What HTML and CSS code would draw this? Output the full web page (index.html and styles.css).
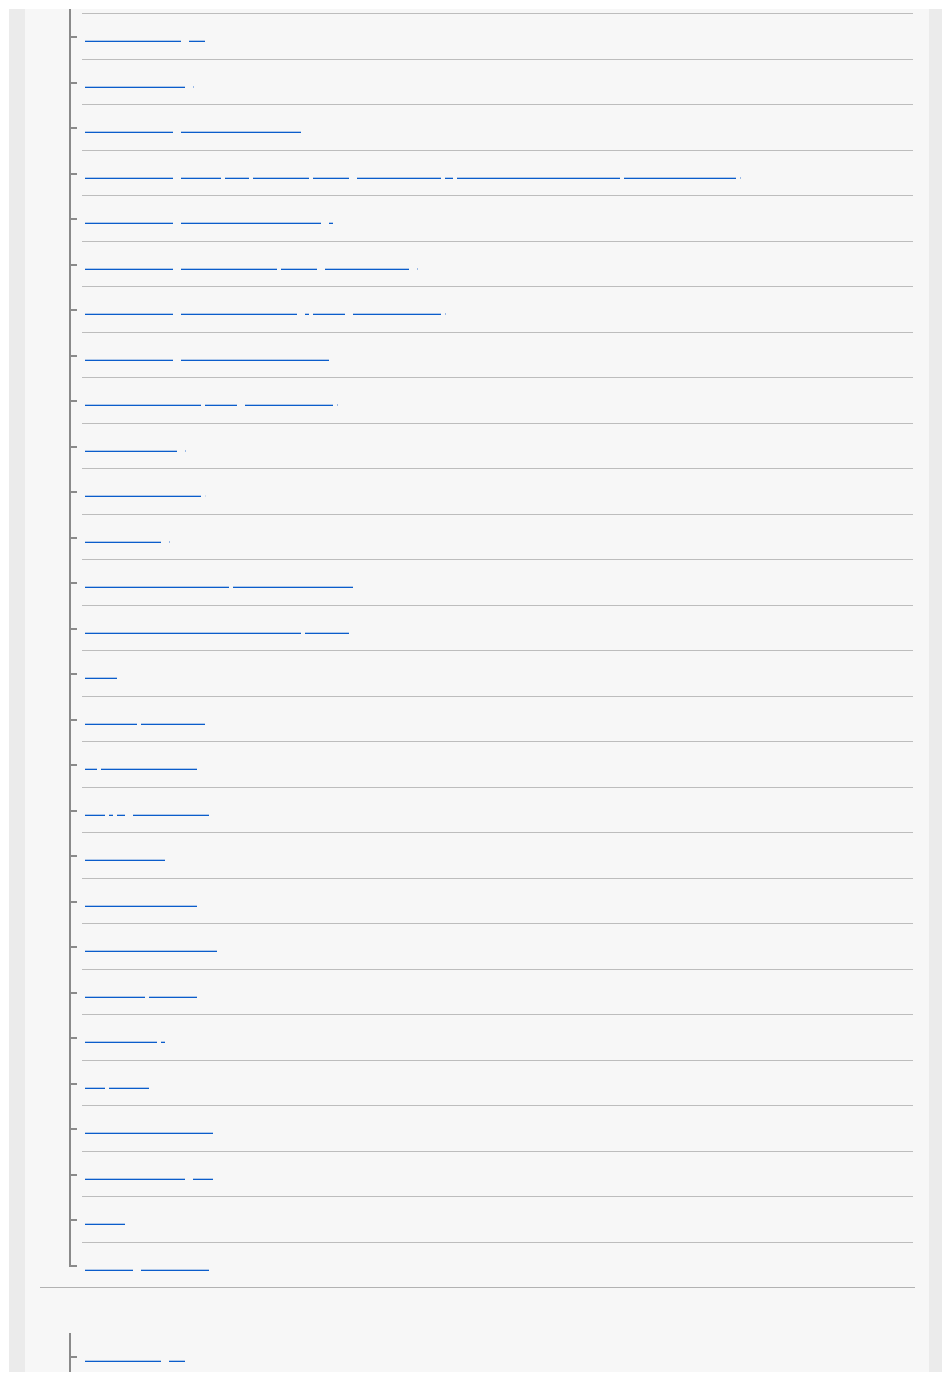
FILE: index.html
```html
<html>
<head>
  <link rel="stylesheet" href="styles.css">
</head>
<body>
<div class="page">
<div class="main">
<div class="section">
<ul class="tree">
<li><a href="#">Shooting with the camera</a>  <a href="#">menu</a></li>
<li><a href="#">Recording movie to a card</a>  <span class="dot"></span></li>
<li><a href="#">Using the camera menus</a>  <a href="#">Setting the white balance mode</a></li>
<li><a href="#">Using the camera menus</a>  <a href="#">Brightness</a> <a href="#">levels</a> <a href="#">for each scene</a> <a href="#">type when</a>  <a href="#">shooting in low light</a> <a href="#">or</a> <a href="#">against a strong backlight at the horizon</a> <a href="#">using automatic HDR blending</a> <span class="dot"></span></li>
<li><a href="#">Using the camera menus</a>  <a href="#">Registering custom shooting setting</a>  <a href="#">2</a></li>
<li><a href="#">Using the camera menus</a>  <a href="#">Selecting the focus area</a> <a href="#">and focus</a>  <a href="#">tracking for subjects</a>  <span class="dot"></span></li>
<li><a href="#">Using the camera menus</a>  <a href="#">Adjusting the eye AF settings</a>  <a href="#">/</a> <a href="#">priority</a>  <a href="#">for humans and animals</a> <span class="dot"></span></li>
<li><a href="#">Using the camera menus</a>  <a href="#">Assigning functions to custom buttons</a></li>
<li><a href="#">Network and wireless settings</a> <a href="#">Wi-Fi/BT</a>  <a href="#">connecting smartphones</a> <span class="dot"></span></li>
<li><a href="#">Transferring the images</a>  <span class="dot"></span></li>
<li><a href="#">Using the computer connection</a> <span class="dot faint"></span></li>
<li><a href="#">Remote shooting app</a>  <span class="dot"></span></li>
<li><a href="#">Streaming video and audio over a USB</a> <a href="#">connection to a computer (UVC)</a></li>
<li><a href="#">Importing and editing images with the imaging software</a> <a href="#">for desktop</a></li>
<li><a href="#">Glossary</a></li>
<li><a href="#">Specification</a> <a href="#">and battery life</a></li>
<li><a href="#">Q&amp;A</a> <a href="#">Troubleshooting messages</a></li>
<li><a href="#">Error</a> <a href="#">/</a> <a href="#">ID</a>  <a href="#">warning indications</a></li>
<li><a href="#">Cleaning the sensors</a></li>
<li><a href="#">Maintenance and storage tips</a></li>
<li><a href="#">Notes on using your camera abroad</a></li>
<li><a href="#">Battery charger</a> <a href="#">and AC power</a></li>
<li><a href="#">Recording capacity</a> <a href="#">1</a></li>
<li><a href="#">Using</a> <a href="#">the lenses</a></li>
<li><a href="#">Recordable time of movie formats</a></li>
<li><a href="#">Memory cards which can be</a>  <a href="#">used.</a></li>
<li><a href="#">Trademarks</a></li>
<li><a href="#">Notes on the</a>  <a href="#">license agreement</a></li>
</ul>
</div>
<div class="section next">
<ul class="tree open">
<li><a href="#">Checking the camera</a>  <a href="#">body</a></li>
</ul>
</div>
</div>
</div>
</body>
</html>
```

FILE: styles.css
```css
body {
  margin: 9px 8px 7px 9px;
  background: #fff;
  font-family: "Liberation Sans", Arial, sans-serif;
}

.page {
  height: 1363px;
  overflow: hidden;
  background: #ebebeb;
  padding: 0 13px 0 16px;
}

.main {
  height: 100%;
  background: #f7f7f7;
}

.section {
  margin: 0 14px 0 15px;
  border-bottom: 1px solid #b2b2b2;
}

.section.next {
  padding-top: 45px;
  border-bottom: none;
}

.tree {
  position: relative;
  list-style: none;
  margin: 0 2px 0 29px;
  padding: 4.3px 0 0;
  font: 6.6667px/7px "Liberation Mono", monospace;
}

.section.next .tree {
  padding-top: 0;
}

/* vertical line of the tree, stops at the last tick */
.tree::before {
  content: "";
  position: absolute;
  left: 0;
  top: 0;
  bottom: 20.5px;
  width: 2px;
  background: #8a8a8a;
}

/* list goes on below the fold */
.tree.open {
  padding-bottom: 40px;
}

.tree.open::before {
  bottom: 0;
}

.tree li {
  position: relative;
  margin-left: 13px;
  height: 45.5px;
  box-sizing: border-box;
  border-top: 1px solid #bdbdbd;
  padding: 21px 0 0 3px;
  white-space: pre;
}

.section.next .tree li:first-child {
  border-top-color: transparent;
}

.tree li::before {
  content: "";
  position: absolute;
  left: -13px;
  top: 22px;
  width: 8px;
  height: 2px;
  background: #8a8a8a;
}

.tree a {
  display: inline-block;
  vertical-align: top;
  height: 6px;
  border-bottom: 1px solid #0b5dcb;
  background: linear-gradient(to top, rgba(11, 93, 203, 0.3) 1px, transparent 1px);
  color: transparent;
  text-decoration: none;
}

.dot {
  display: inline-block;
  vertical-align: top;
  width: 1px;
  height: 2px;
  margin-top: 5px;
  background: #9dbbe6;
}

.dot.faint {
  background: #d4e0f0;
}
```
